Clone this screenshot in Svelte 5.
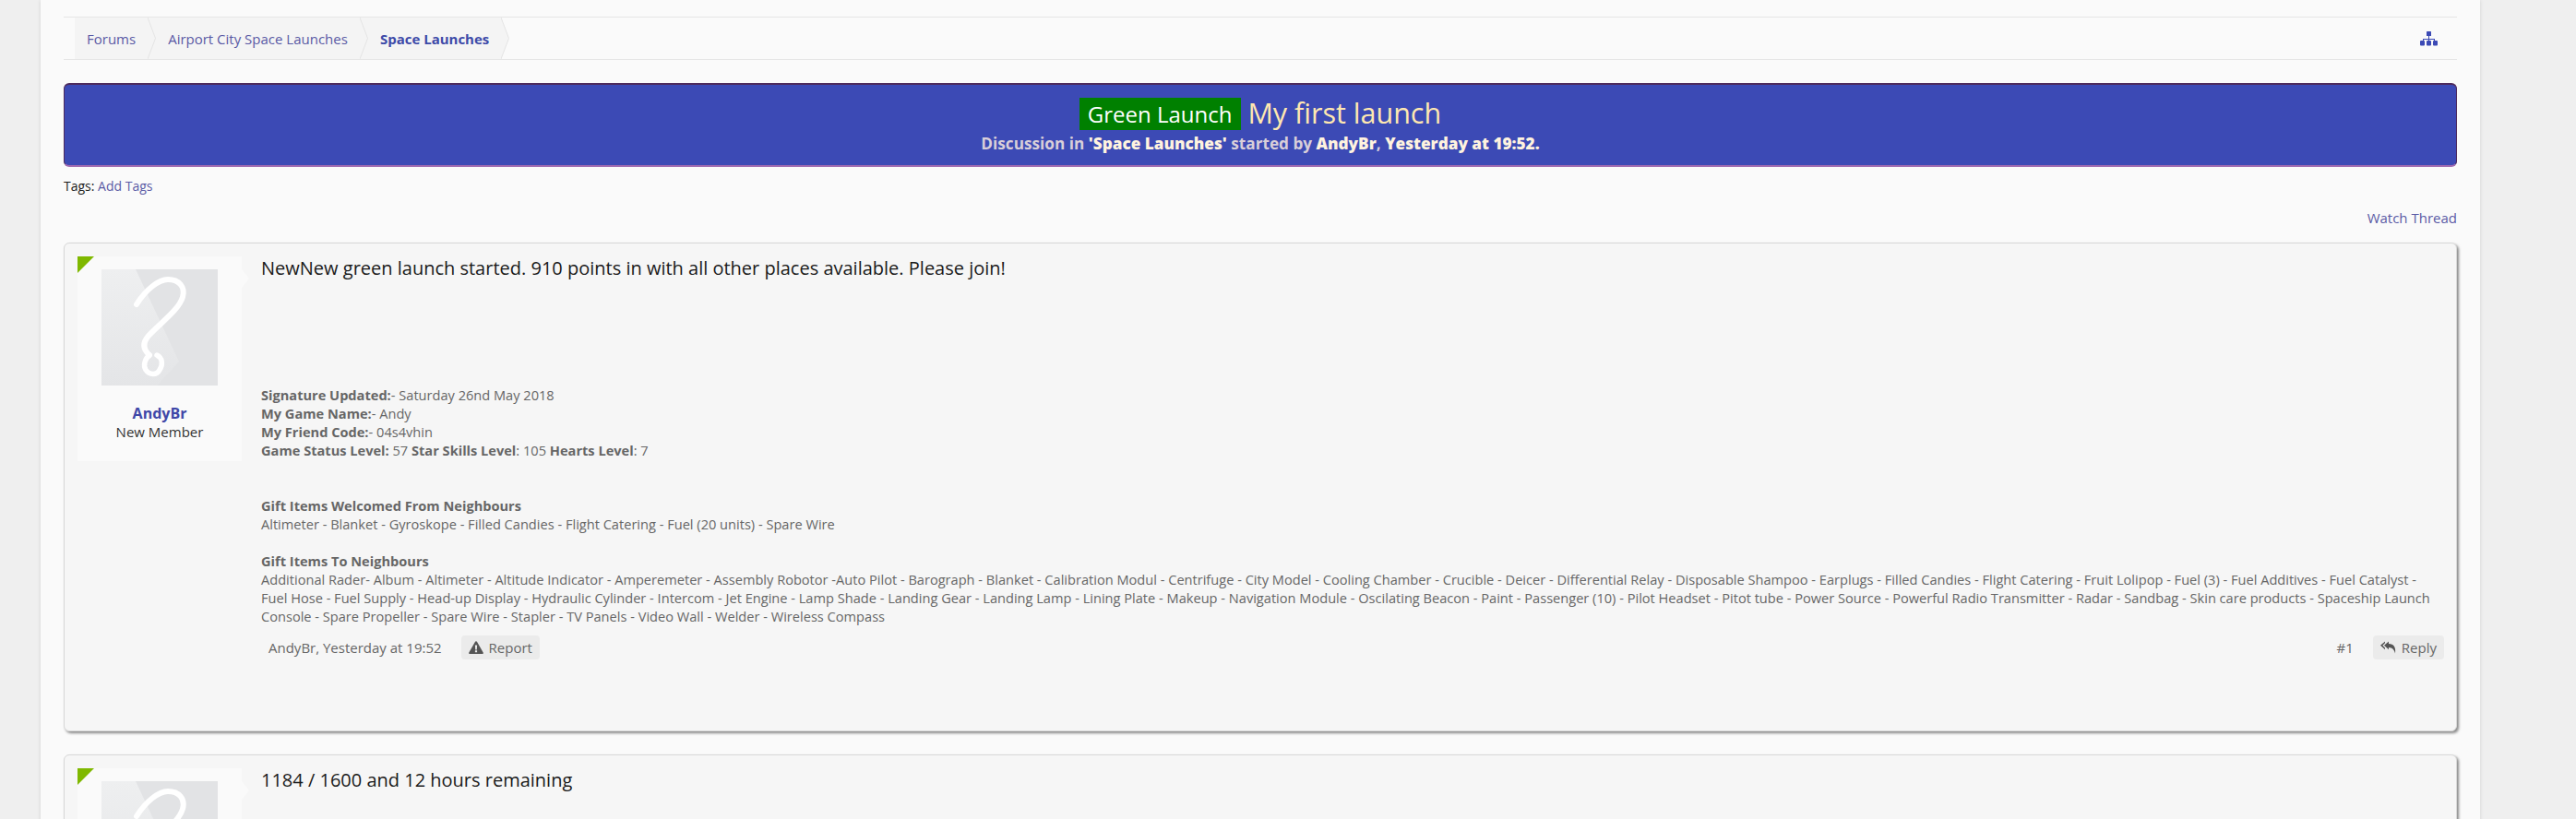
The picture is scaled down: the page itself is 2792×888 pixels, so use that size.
<script>
  const crumbs = ['Forums', 'Airport City Space Launches', 'Space Launches'];
  const welcomed = 'Altimeter - Blanket - Gyroskope - Filled Candies - Flight Catering - Fuel (20 units) - Spare Wire';
  const giftItems = 'Additional Rader- Album - Altimeter - Altitude Indicator - Amperemeter - Assembly Robotor -Auto Pilot - Barograph - Blanket - Calibration Modul - Centrifuge - City Model - Cooling Chamber - Crucible - Deicer - Differential Relay - Disposable Shampoo - Earplugs - Filled Candies - Flight Catering - Fruit Lolipop - Fuel (3) - Fuel Additives - Fuel Catalyst - Fuel Hose - Fuel Supply - Head-up Display - Hydraulic Cylinder - Intercom - Jet Engine - Lamp Shade - Landing Gear - Landing Lamp - Lining Plate - Makeup - Navigation Module - Oscilating Beacon - Paint - Passenger (10) - Pilot Headset - Pitot tube - Power Source - Powerful Radio Transmitter - Radar - Sandbag - Skin care products - Spaceship Launch Console - Spare Propeller - Spare Wire - Stapler - TV Panels - Video Wall - Welder - Wireless Compass';
</script>

{#snippet userBlock(withName)}
  <div class="user">
    <span class="corner"></span>
    <span class="nub"></span>
    <svg class="avatar" viewBox="0 0 126 126" aria-hidden="true">
      <defs>
        <linearGradient id="shade" x1="0" y1="0" x2="0" y2="1">
          <stop offset="0" stop-color="#eeeff0" />
          <stop offset="1" stop-color="#e4e5e7" />
        </linearGradient>
      </defs>
      <rect width="126" height="126" fill="#e2e3e5" />
      <path d="M0 0H37L84 100L60 126H0Z" fill="url(#shade)" />
      <path
        d="M38 38C48 22 62 11 72 11C84 11 91 19 88 30C84 44 64 58 51 72C45 79 44 86 52 93"
        fill="none"
        stroke="#fff"
        stroke-width="6"
        stroke-linecap="round"
      />
      <path
        d="M52 93C47 97 45 104 48 109C52 115 60 115 63 109C67 103 66 96 60 93"
        fill="none"
        stroke="#fff"
        stroke-width="5.5"
        stroke-linecap="round"
      />
    </svg>
    {#if withName}
      <div class="username">AndyBr</div>
      <div class="usertitle">New Member</div>
    {/if}
  </div>
{/snippet}

<div class="page">
  <div class="wrapper">
    <nav class="breadcrumb">
      <ul>
        {#each crumbs as crumb, i}
          <li class:current={i === crumbs.length - 1}>
            <span>{crumb}</span>
            <svg class="chevron" viewBox="0 0 9 45" aria-hidden="true">
              <path d="M0 0L8.5 22.5L0 45" fill="#f4f4f4" stroke="#e4e4e4" />
            </svg>
          </li>
        {/each}
      </ul>
      <svg class="sitemap" viewBox="0 0 19 16" aria-hidden="true">
        <rect x="7" y="0" width="5" height="5" rx="0.5" />
        <path d="M9 5h1v3h6v2h-1V9h-5v1H9V9H4v1H3V8h6Z" />
        <rect x="0" y="10" width="5" height="5.5" rx="1" />
        <rect x="7" y="10" width="5" height="5.5" rx="1" />
        <rect x="14" y="10" width="5" height="5.5" rx="1" />
      </svg>
    </nav>

    <header class="title-bar">
      <h1><span class="prefix">Green Launch</span> My first launch</h1>
      <p>Discussion in <b>'Space Launches'</b> started by <b>AndyBr</b>, <b>Yesterday at 19:52.</b></p>
    </header>

    <div class="tags">Tags: <a href="#tags">Add Tags</a></div>
    <div class="watch"><a href="#watch">Watch Thread</a></div>

    <article class="post">
      {@render userBlock(true)}
      <div class="content">
        <div class="message">NewNew green launch started. 910 points in with all other places available. Please join!</div>
        <div class="signature">
          <div><b>Signature Updated:</b>- Saturday 26nd May 2018</div>
          <div><b>My Game Name:</b>- Andy</div>
          <div><b>My Friend Code:</b>- 04s4vhin</div>
          <div><b>Game Status Level:</b> 57 <b>Star Skills Level</b>: 105 <b>Hearts Level</b>: 7</div>
          <div class="gift-first"><b>Gift Items Welcomed From Neighbours</b></div>
          <div>{welcomed}</div>
          <div class="gift-second"><b>Gift Items To Neighbours</b></div>
          <div>{giftItems}</div>
        </div>
        <div class="meta">
          <div class="meta-left">
            <span class="stamp">AndyBr, Yesterday at 19:52</span>
            <a class="action" href="#report">
              <svg viewBox="0 0 16 14" width="16" height="14" aria-hidden="true">
                <path fill-rule="evenodd" d="M8 0.3C8.5 0.3 8.9 0.6 9.1 1L15.7 12.4C16.1 13.1 15.6 14 14.8 14H1.2C0.4 14 -0.1 13.1 0.3 12.4L6.9 1C7.1 0.6 7.5 0.3 8 0.3ZM6.9 4.6L7.2 9.4H8.8L9.1 4.6ZM6.9 10.3V12.2H9.1V10.3Z" />
              </svg>
              Report
            </a>
          </div>
          <div class="meta-right">
            <span class="num">#1</span>
            <a class="action" href="#reply">
              <svg viewBox="0 0 17 14" width="17" height="14" aria-hidden="true">
                <path d="M5 0.5V2.3L2.4 4.8L5 7.4V9.2L0 4.8Z" />
                <path d="M9 0.5V3C14.5 3.2 17 6.6 16 13.5C15 9.6 13 7.2 9 7V9.2L4 4.8Z" />
              </svg>
              Reply
            </a>
          </div>
        </div>
      </div>
    </article>

    <article class="post">
      {@render userBlock(false)}
      <div class="content">
        <div class="message">1184 / 1600 and 12 hours remaining</div>
      </div>
    </article>
  </div>
</div>

<style>
  :global(body) {
    background: #efefef;
  }

  .page {
    height: 888px;
    overflow: hidden;
    font-family: 'Open Sans', sans-serif;
    font-size: 15px;
    color: #1a1a1a;
  }

  .wrapper {
    width: 2594px;
    margin-left: 44px;
    padding: 18px 25px 0;
    background: #fafafa;
    box-shadow: 0 0 4px rgba(0, 0, 0, 0.12);
    min-height: 870px;
  }

  a {
    color: #5a5aa5;
    text-decoration: none;
  }

  .breadcrumb {
    display: flex;
    justify-content: space-between;
    align-items: center;
    height: 45px;
    border-top: 1px solid #e6e6e6;
    border-bottom: 1px solid #e6e6e6;
  }

  .breadcrumb ul {
    display: flex;
    list-style: none;
    margin: 0;
    padding: 0 0 0 12px;
    height: 100%;
  }

  .breadcrumb li {
    position: relative;
    display: flex;
    align-items: center;
    background: #f4f4f4;
    padding: 0 13px;
    color: #5a5aa5;
    font-size: 15px;
  }

  .breadcrumb li + li {
    padding-left: 22px;
  }

  .breadcrumb li.current {
    font-weight: 700;
    color: #3d4aa8;
  }

  .chevron {
    position: absolute;
    left: 100%;
    top: 0;
    width: 9px;
    height: 45px;
    z-index: 1;
  }

  .sitemap {
    width: 19px;
    height: 16px;
    margin-right: 21px;
    fill: #3c4ab5;
  }

  .title-bar {
    margin-top: 25px;
    height: 91px;
    box-sizing: border-box;
    background: #3c4ab5;
    border: 1px solid #4d2a5c;
    border-top-width: 2px;
    border-bottom: 2px solid #a06ab0;
    border-radius: 6px;
    text-align: center;
    color: #d9cfd9;
  }

  .title-bar h1 {
    margin: 9px 0 0;
    font-size: 30.5px;
    font-weight: 400;
    line-height: 42px;
    color: #ffe8b0;
  }

  .prefix {
    display: inline-block;
    padding: 0 9px;
    background: #008000;
    color: #fff;
    font-size: 24px;
    line-height: 35px;
    vertical-align: 1px;
  }

  .title-bar p {
    margin: 1px 0 0;
    font-size: 17.2px;
    font-weight: 700;
    line-height: 24px;
  }

  .title-bar b {
    color: #fff3df;
  }

  .tags {
    margin-top: 11px;
    font-size: 14px;
    line-height: 20px;
  }

  .watch {
    margin-top: 14px;
    text-align: right;
    line-height: 20px;
  }

  .post {
    display: flex;
    gap: 21px;
    margin-top: 17px;
    margin-bottom: 25px;
    height: 514px;
    padding: 14px 13px 0 14px;
    box-sizing: border-box;
    background: #f6f6f6;
    border: 1px solid #d8d8d8;
    border-radius: 6px;
    box-shadow: 2px 2px 3px rgba(0, 0, 0, 0.45);
  }

  .post + .post {
    margin-top: 0;
  }

  .post:first-of-type {
    height: 530px;
  }

  .user {
    position: relative;
    flex: none;
    box-sizing: border-box;
    width: 178px;
    height: 222px;
    padding-top: 14px;
    background: #fafafa;
    text-align: center;
  }

  .corner {
    position: absolute;
    left: 0;
    top: 0;
    border-style: solid;
    border-width: 18px 18px 0 0;
    border-color: #7fb800 transparent transparent transparent;
  }

  .nub {
    position: absolute;
    left: 100%;
    top: 14px;
    border-style: solid;
    border-width: 10px 0 10px 8px;
    border-color: transparent transparent transparent #fafafa;
  }

  .avatar {
    display: block;
    width: 126px;
    height: 126px;
    margin: 0 auto;
  }

  .username {
    margin-top: 20px;
    font-size: 16px;
    font-weight: 700;
    line-height: 20px;
    color: #4048a8;
  }

  .usertitle {
    font-size: 15px;
    line-height: 20px;
    color: #333;
  }

  .content {
    flex: 1;
    min-width: 0;
  }

  .message {
    font-size: 20px;
    line-height: 28px;
    margin-top: -1px;
    color: #1a1a1a;
  }

  .signature {
    margin-top: 113px;
    font-size: 14.6px;
    line-height: 20px;
    color: #666;
    padding-right: 6px;
  }

  .gift-first {
    margin-top: 40px;
  }

  .gift-second {
    margin-top: 20px;
  }

  .meta {
    display: flex;
    justify-content: space-between;
    align-items: center;
    margin-top: 11px;
    height: 26px;
    color: #666;
  }

  .meta-left,
  .meta-right {
    display: flex;
    align-items: center;
  }

  .stamp {
    margin-left: 8px;
    margin-right: 21px;
  }

  .num {
    margin-right: 21px;
  }

  .action {
    display: flex;
    align-items: center;
    gap: 6px;
    height: 26px;
    padding: 0 8px;
    background: #ebebeb;
    border-radius: 4px;
    color: #666;
  }

  .action svg {
    fill: #555;
  }
</style>
